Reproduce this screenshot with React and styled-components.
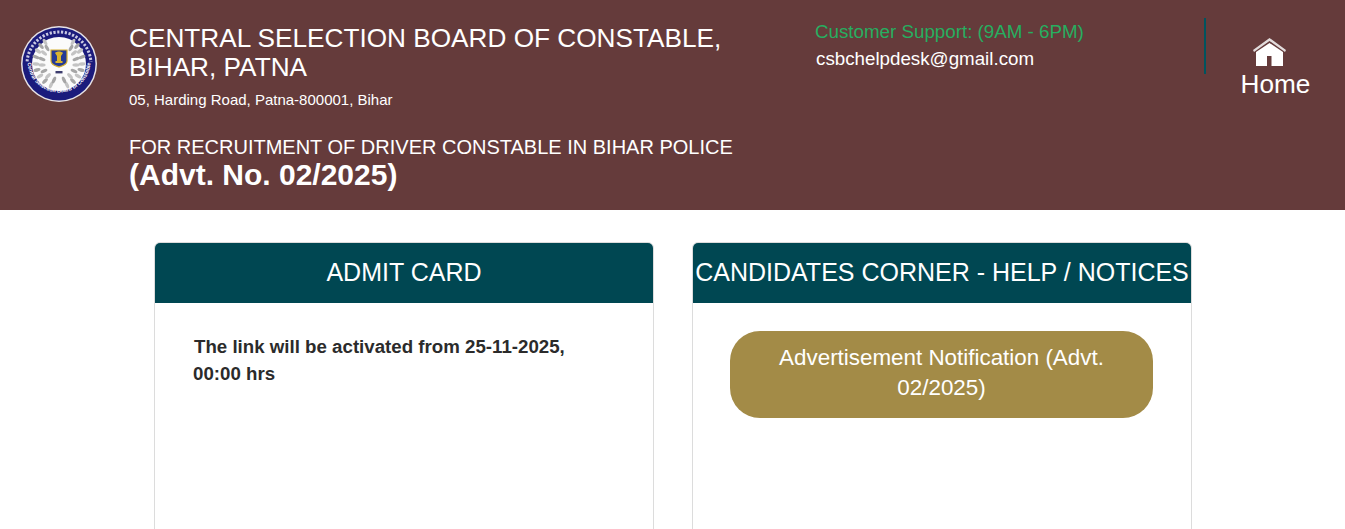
import styled, { createGlobalStyle } from 'styled-components';

const Global = createGlobalStyle`
  html, body { margin: 0; padding: 0; background: #fff; overflow: hidden; }
  body { font-family: "Liberation Sans", Arial, sans-serif; }
`;

const Header = styled.header`
  display: flex;
  height: 210px;
  background: #653b3b;
  color: #fff;
  box-sizing: border-box;
`;

const LogoBox = styled.div`
  width: 129px;
  padding: 26px 0 0 21px;
  box-sizing: border-box;
  flex: none;
`;

const Titles = styled.div`
  width: 686px;
  flex: none;
  padding-top: 24px;
  box-sizing: border-box;
`;

const BoardName = styled.h1`
  margin: 0;
  width: 620px;
  font-size: 26.2px;
  font-weight: 400;
  line-height: 29px;
`;

const Address = styled.p`
  margin: 9px 0 0;
  font-size: 15px;
  line-height: 18px;
`;

const Recruit = styled.p`
  margin: 26px 0 0;
  font-size: 20px;
  line-height: 24px;
`;

const Advt = styled.p`
  margin: 0;
  font-size: 30px;
  font-weight: 700;
  line-height: 31px;
`;

const Support = styled.div`
  width: 389px;
  flex: none;
  padding-top: 21px;
  box-sizing: border-box;
`;

const SupportHours = styled.div`
  color: #27ae60;
  font-size: 18.75px;
  line-height: 22px;
`;

const SupportMail = styled.div`
  margin: 5px 0 0 1px;
  font-size: 18.75px;
  line-height: 22px;
`;

const HomeLink = styled.a`
  margin-top: 18px;
  height: 56px;
  width: 141px;
  border-left: 2px solid #00545f;
  display: flex;
  flex-direction: column;
  align-items: center;
  color: #fff;
  text-decoration: none;
  font-size: 26.2px;
  line-height: 30px;
`;

const HomeIcon = styled.svg`
  width: 33px;
  height: 28px;
  margin: 20px 13px 0 0;
  flex: none;
`;

const HomeLabel = styled.span`
  margin-top: 3px;
`;

const Main = styled.main`
  display: flex;
  justify-content: center;
  gap: 38px;
  padding: 32px 0 0 1px;
`;

const Card = styled.section`
  width: 500px;
  height: 500px;
  box-sizing: border-box;
  border: 1px solid #dcdcdc;
  border-radius: 6px;
  overflow: hidden;
`;

const CardHeader = styled.h2`
  margin: 0;
  height: 60px;
  background: #004752;
  color: #fff;
  font-size: 25px;
  font-weight: 400;
  line-height: 58px;
  text-align: center;
  white-space: nowrap;
`;

const CardBody = styled.div`
  padding: ${p => p.$pad};
`;

const Notice = styled.p`
  margin: 0;
  color: #2b2b2b;
  font-size: 18.7px;
  font-weight: 700;
  line-height: 27px;
  text-indent: 1px;
`;

const PillButton = styled.a`
  display: block;
  width: 423px;
  margin-left: 37px;
  padding: 12px 20px 15px;
  box-sizing: border-box;
  background: #a38b47;
  color: #fff;
  border-radius: 30px;
  font-size: 22.4px;
  line-height: 30px;
  text-align: center;
`;

const EmblemLabel = styled.text`
  font-family: "Liberation Sans", Arial, sans-serif;
  font-size: 5.4px;
  font-weight: 700;
  fill: #fff;
`;

// wreath leaves on the left branch, mirrored for the right one
const leaves = [
  [-14, -22, 60], [-18, -18, 50], [-21, -13, 35], [-23, -7, 20], [-23, 0, 5], [-22, 6, -15], [-19, 12, -30], [-14, 17, -45], [-8, 21, -65],
  [-12, -16, 60], [-15, -11, 40], [-17, -5, 20], [-17, 1, 0], [-15, 7, -25], [-11, 12, -45], [-5, 16, -65],
];

const Emblem = () => (
  <svg width="76" height="76" viewBox="-38 -38 76 76">
    <defs>
      <path id="ringBottom" d="M-31.5 -3 A31.5 31.5 0 0 0 31.5 -3" />
      <clipPath id="topArc">
        <rect x="-38" y="-38" width="76" height="36" />
      </clipPath>
    </defs>
    <circle r="38" fill="#e6e2e6" />
    <circle r="36.5" fill="#1b1b7c" />
    <circle r="27" fill="#fbfbfb" />
    <circle r="32" fill="none" stroke="#e8e8f4" strokeWidth="3" strokeDasharray="2.2 1.6" pathLength="200" strokeOpacity="0.85" clipPath="url(#topArc)" />
    <EmblemLabel textAnchor="middle">
      <textPath href="#ringBottom" startOffset="50%">Central Selection Board of Constable</textPath>
    </EmblemLabel>
    {leaves.map(([x, y, a], i) => (
      <g key={i} fill={i % 2 ? '#a6a6a6' : '#c4c4c4'}>
        <ellipse cx={x} cy={y} rx="3.6" ry="1.7" transform={`rotate(${a} ${x} ${y})`} />
        <ellipse cx={-x} cy={y} rx="3.6" ry="1.7" transform={`rotate(${-a} ${-x} ${y})`} />
      </g>
    ))}
    <path d="M-8 -14 H8 V-3 C8 1 3 2 0 3 C-3 2 -8 1 -8 -3 Z" fill="#243a96" stroke="#d6b02c" strokeWidth="1.2" />
    <path d="M-4 -11 C-2 -13 2 -13 4 -11 L2 -8 V-3 H3.5 V-1 H-3.5 V-3 H-2 V-8 Z" fill="#d8b42f" />
    <rect x="-3.5" y="7" width="7" height="2.4" fill="#3d3d6e" />
  </svg>
);

export default function App() {
  return (
    <>
      <Global />
      <Header>
        <LogoBox>
          <Emblem />
        </LogoBox>
        <Titles>
          <BoardName>CENTRAL SELECTION BOARD OF CONSTABLE, BIHAR, PATNA</BoardName>
          <Address>05, Harding Road, Patna-800001, Bihar</Address>
          <Recruit>FOR RECRUITMENT OF DRIVER CONSTABLE IN BIHAR POLICE</Recruit>
          <Advt>(Advt. No. 02/2025)</Advt>
        </Titles>
        <Support>
          <SupportHours>Customer Support: (9AM - 6PM)</SupportHours>
          <SupportMail>csbchelpdesk@gmail.com</SupportMail>
        </Support>
        <HomeLink>
          <HomeIcon viewBox="0 0 33 28">
            <path d="M16.5 0 L33 12 L32 14 L16.5 3 L1 14 L0 12 Z" fill="#e2dcdc" />
            <path d="M3 14 L16.5 5 L30 14 V28 H18.5 V18 H14 V28 H3 Z" fill="#fff" />
          </HomeIcon>
          <HomeLabel>Home</HomeLabel>
        </HomeLink>
      </Header>
      <Main>
        <Card>
          <CardHeader>ADMIT CARD</CardHeader>
          <CardBody $pad="30px 70px 0 38px">
            <Notice>The link will be activated from 25-11-2025, 00:00 hrs</Notice>
          </CardBody>
        </Card>
        <Card>
          <CardHeader>CANDIDATES CORNER - HELP / NOTICES</CardHeader>
          <CardBody $pad="28px 0 0">
            <PillButton>Advertisement Notification (Advt. 02/2025)</PillButton>
          </CardBody>
        </Card>
      </Main>
    </>
  );
}
